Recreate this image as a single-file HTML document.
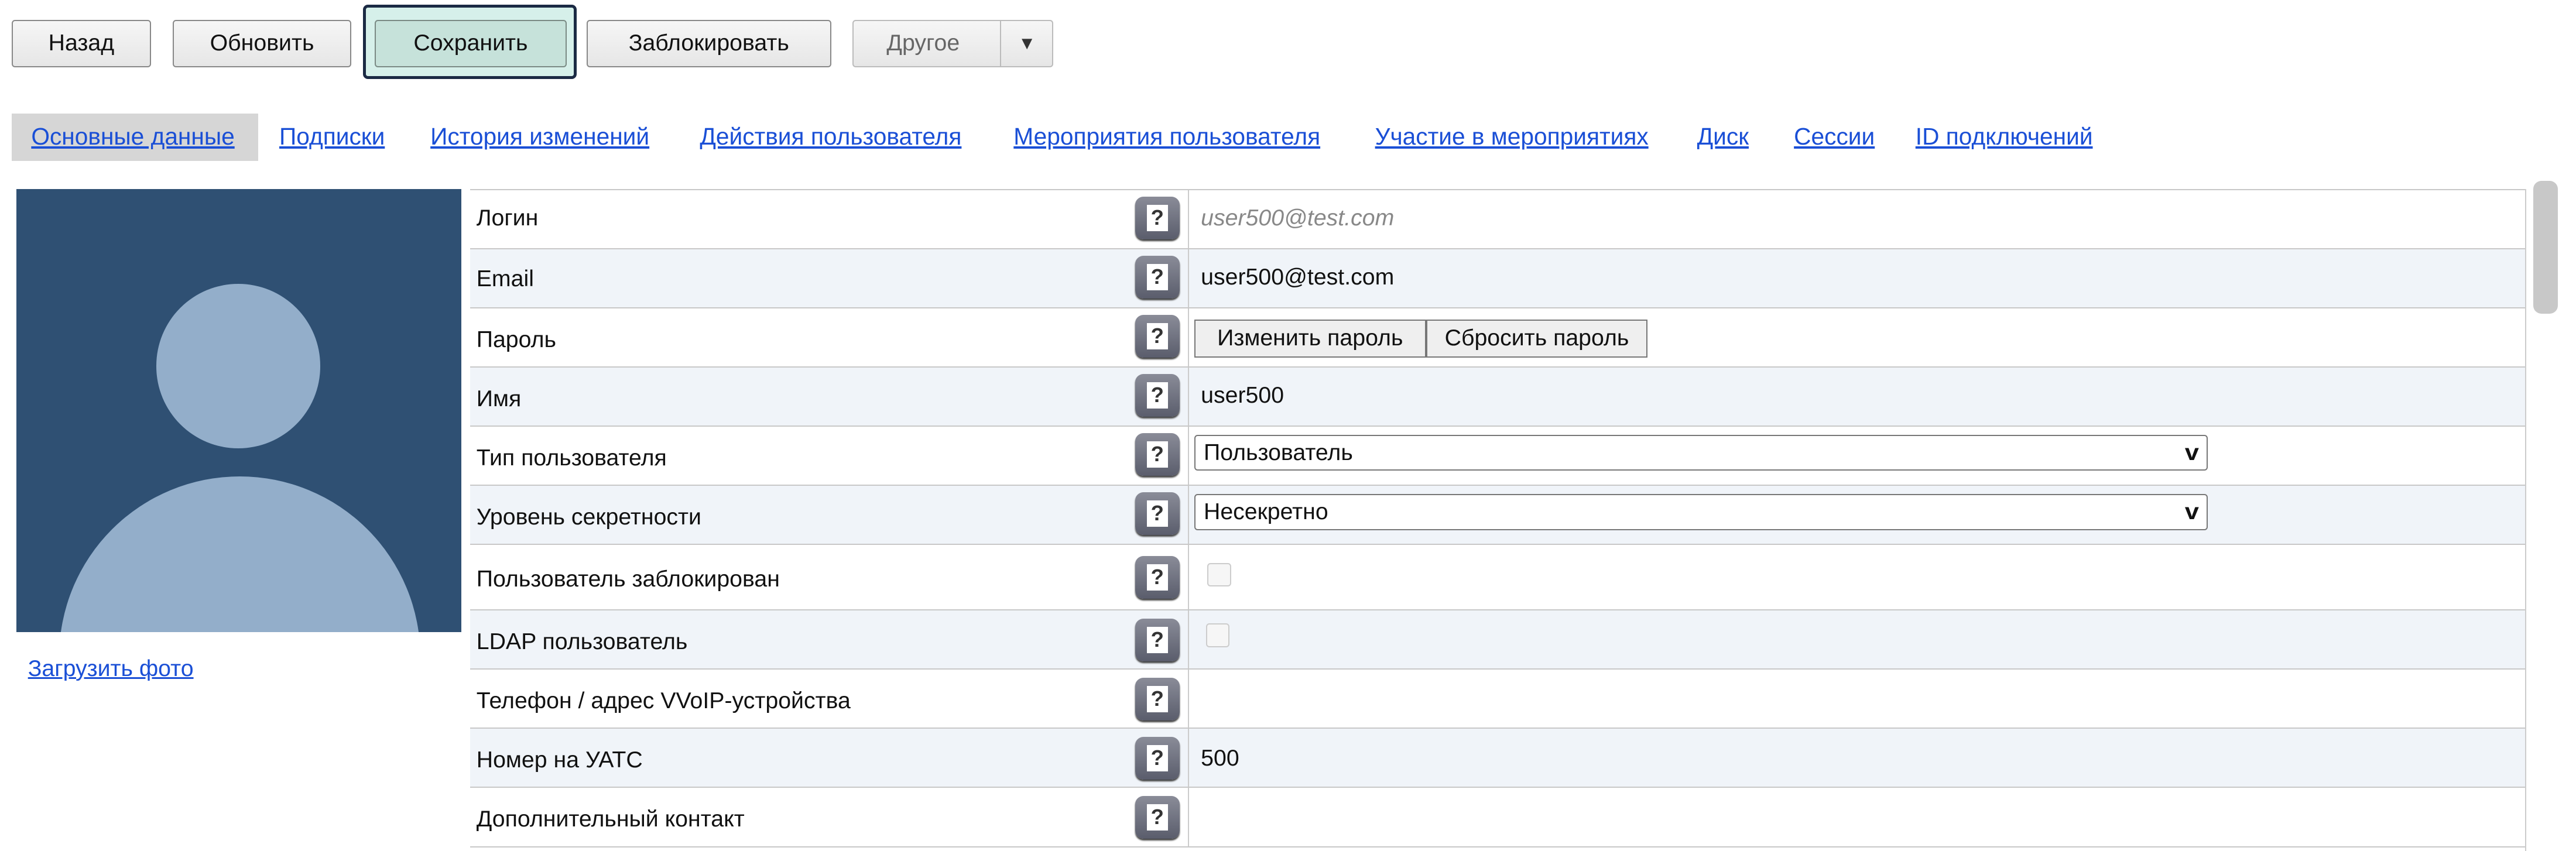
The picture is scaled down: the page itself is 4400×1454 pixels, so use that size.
<!DOCTYPE html>
<html><head><meta charset="utf-8"><style>
html,body{margin:0;padding:0;background:#fff;}
body{width:4400px;height:1453px;overflow:hidden;}
#w{zoom:2.806;width:1568px;height:518px;position:relative;font-family:"Liberation Sans","DejaVu Sans",sans-serif;font-size:14px;color:#111;}
.a{position:absolute;}
.btn{position:absolute;top:12px;height:29px;box-sizing:border-box;border:1px solid #888;border-radius:2px;background:linear-gradient(#f6f6f6,#e6e6e6);text-align:center;line-height:27px;font-size:14px;}
a{color:#1a4fd6;text-decoration:underline;}
.tab{position:absolute;top:75px;font-size:14.5px;}
.row{position:absolute;left:286px;width:1251px;box-sizing:border-box;border-top:1px solid #c8c8c8;}
.row .l{position:absolute;left:4px;font-size:14px;}
.row .d{position:absolute;left:437px;top:0;bottom:0;border-left:1px solid #ccc;}
.q{position:absolute;left:405px;width:27px;height:26px;border-radius:5px;background:linear-gradient(#8a8c98,#5a5d6c);box-shadow:0 1px 1px #444;}
.q i{position:absolute;left:7px;top:5px;width:13px;height:16px;background:#fff;font-style:normal;font-weight:bold;font-size:13px;line-height:16px;text-align:center;color:#333;}
.v{position:absolute;left:445px;}
.sel{position:absolute;left:441px;width:617px;height:22px;box-sizing:border-box;border:1px solid #777;border-radius:2px;background:#fff;padding-left:5px;line-height:20px;font-size:14px;}
.sel:after{content:"v";position:absolute;right:5px;top:0;font-size:14px;font-weight:bold;transform:scaleX(1.1);}
.cb{position:absolute;left:449px;width:13px;height:13px;border:1px solid #ccc;border-radius:2px;background:#f6f6f6;}
.sb{position:absolute;top:0;height:23px;box-sizing:border-box;border:1px solid #777;background:#efefef;line-height:21px;text-align:center;font-size:14px;}
</style></head><body><div id="w">
<div class="btn" style="left:7px;width:85px">Назад</div>
<div class="btn" style="left:105px;width:109px">Обновить</div>
<div class="a" style="left:221px;top:3px;width:130px;height:45px;box-sizing:border-box;border:2px solid #1b2a44;border-radius:3px;background:#d6f0ea"></div>
<div class="btn" style="left:228px;width:117px;background:#c6e2da;border-color:#7a8a84">Сохранить</div>
<div class="btn" style="left:357px;width:149px">Заблокировать</div>
<div class="btn" style="left:519px;width:122px;color:#666;text-align:left;padding-left:20px;border-color:#bbb">Другое<span style="position:absolute;left:89px;top:0;bottom:0;border-left:1px solid #bbb"></span><span style="position:absolute;left:100px;top:0;font-size:11px;color:#333">▼</span></div>

<div class="a" style="left:7px;top:69px;width:150px;height:29px;background:#d6d6d6"></div>
<a class="tab" style="left:19px">Основные данные</a>
<a class="tab" style="left:170px">Подписки</a>
<a class="tab" style="left:262px">История изменений</a>
<a class="tab" style="left:426px">Действия пользователя</a>
<a class="tab" style="left:617px">Мероприятия пользователя</a>
<a class="tab" style="left:837px">Участие в мероприятиях</a>
<a class="tab" style="left:1033px">Диск</a>
<a class="tab" style="left:1092px">Сессии</a>
<a class="tab" style="left:1166px">ID подключений</a>

<div class="a" style="left:10px;top:115px;width:271px;height:270px;background:#2f5073;overflow:hidden">
<div class="a" style="left:85px;top:58px;width:100px;height:100px;border-radius:50%;background:#93aeca"></div>
<div class="a" style="left:26px;top:175px;width:220px;height:220px;border-radius:50%;background:#93aeca"></div>
</div>
<a class="a" style="left:17px;top:399px;font-size:14px">Загрузить фото</a>

<div class="row" style="top:115px;height:36px;background:#fff"><span class="l" style="top:9px">Логин</span><div class="q" style="top:4px"><i>?</i></div><div class="d"></div><span class="v" style="top:9px;color:#888;font-style:italic">user500@test.com</span></div>
<div class="row" style="top:151px;height:36px;background:#f0f4f9"><span class="l" style="top:10px">Email</span><div class="q" style="top:4px"><i>?</i></div><div class="d"></div><span class="v" style="top:9px">user500@test.com</span></div>
<div class="row" style="top:187px;height:36px;background:#fff"><span class="l" style="top:11px">Пароль</span><div class="q" style="top:4px"><i>?</i></div><div class="d"></div><div class="a" style="left:441px;top:7px;width:300px;height:23px"><div class="sb" style="left:0;width:141px">Изменить пароль</div><div class="sb" style="left:141px;width:135px">Сбросить пароль</div></div></div>
<div class="row" style="top:223px;height:36px;background:#f0f4f9"><span class="l" style="top:11px">Имя</span><div class="q" style="top:4px"><i>?</i></div><div class="d"></div><span class="v" style="top:9px">user500</span></div>
<div class="row" style="top:259px;height:36px;background:#fff"><span class="l" style="top:11px">Тип пользователя</span><div class="q" style="top:4px"><i>?</i></div><div class="d"></div><div class="sel" style="top:5px">Пользователь</div></div>
<div class="row" style="top:295px;height:36px;background:#f0f4f9"><span class="l" style="top:11px">Уровень секретности</span><div class="q" style="top:4px"><i>?</i></div><div class="d"></div><div class="sel" style="top:5px">Несекретно</div></div>
<div class="row" style="top:331px;height:40px;background:#fff"><span class="l" style="top:13px">Пользователь заблокирован</span><div class="q" style="top:7px"><i>?</i></div><div class="d"></div><div class="cb" style="top:11px"></div></div>
<div class="row" style="top:371px;height:36px;background:#f0f4f9"><span class="l" style="top:11px">LDAP пользователь</span><div class="q" style="top:5px"><i>?</i></div><div class="d"></div><div class="cb" style="top:8px;left:448px"></div></div>
<div class="row" style="top:407px;height:36px;background:#fff"><span class="l" style="top:11px">Телефон / адрес VVoIP-устройства</span><div class="q" style="top:5px"><i>?</i></div><div class="d"></div></div>
<div class="row" style="top:443px;height:36px;background:#f0f4f9"><span class="l" style="top:11px">Номер на УАТС</span><div class="q" style="top:5px"><i>?</i></div><div class="d"></div><span class="v" style="top:10px">500</span></div>
<div class="row" style="top:479px;height:37px;background:#fff;border-bottom:1px solid #c8c8c8"><span class="l" style="top:11px">Дополнительный контакт</span><div class="q" style="top:5px"><i>?</i></div><div class="d"></div></div>
<div class="a" style="left:1537px;top:115px;height:403px;border-left:1px solid #ccc"></div>
<div class="a" style="left:1542px;top:110px;width:15px;height:81px;border-radius:5px;background:#c8c8c8"></div>
</div></body></html>
